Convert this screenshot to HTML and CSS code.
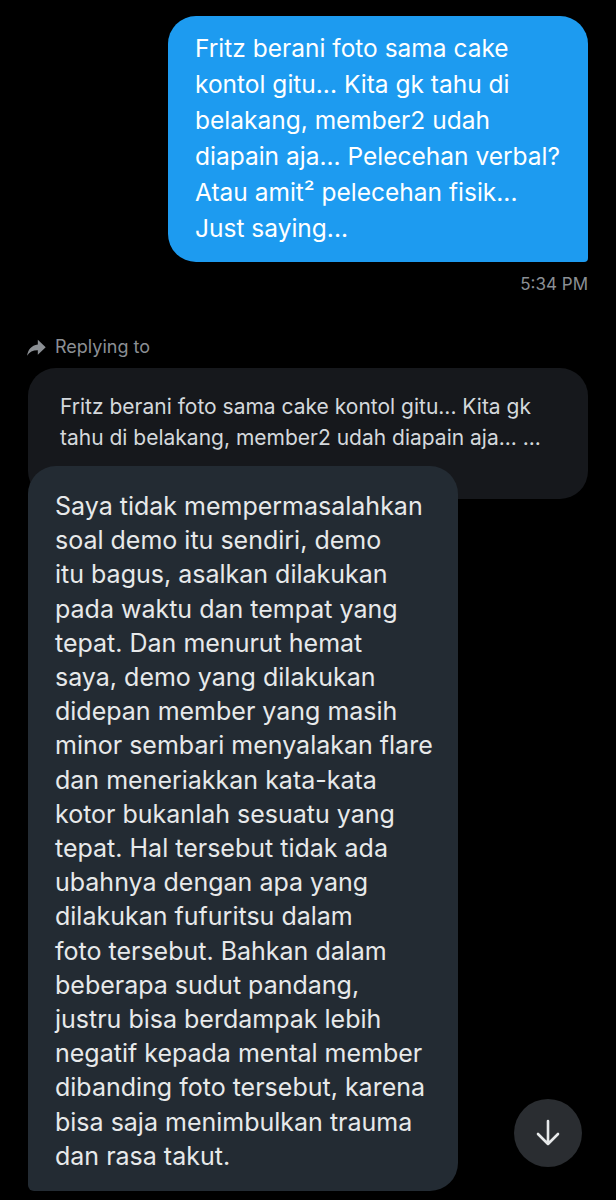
FILE: index.html
```html
<!DOCTYPE html>
<html>
<head>
<meta charset="utf-8">
<link rel="stylesheet" href="styles.css">
</head>
<body>
<div class="thread">
  <div class="sent-row">
    <div class="bubble bubble-sent">Fritz berani foto sama cake<br>kontol gitu... Kita gk tahu di<br>belakang, member2 udah<br>diapain aja... Pelecehan verbal?<br>Atau amit² pelecehan fisik...<br>Just saying...</div>
  </div>
  <div class="time">5:34 PM</div>

  <div class="replying">
    <svg class="reply-icon" viewBox="0 0 24 24" width="21" height="21"><path d="M13.5 3.2l9 8.6-9 8.6v-5.2c-5.6-.1-9.4 1.8-12.3 6.2 1-6.8 4.8-11.9 12.3-12.9V3.2z" fill="#8b8f94"/></svg>
    <span>Replying to</span>
  </div>
  <div class="quote">Fritz berani foto sama cake kontol gitu... Kita gk<br>tahu di belakang, member2 udah diapain aja... ...</div>

  <div class="bubble bubble-recv">Saya tidak mempermasalahkan<br>soal demo itu sendiri, demo<br>itu bagus, asalkan dilakukan<br>pada waktu dan tempat yang<br>tepat. Dan menurut hemat<br>saya, demo yang dilakukan<br>didepan member yang masih<br>minor sembari menyalakan flare<br>dan meneriakkan kata-kata<br>kotor bukanlah sesuatu yang<br>tepat. Hal tersebut tidak ada<br>ubahnya dengan apa yang<br>dilakukan fufuritsu dalam<br>foto tersebut. Bahkan dalam<br>beberapa sudut pandang,<br>justru bisa berdampak lebih<br>negatif kepada mental member<br>dibanding foto tersebut, karena<br>bisa saja menimbulkan trauma<br>dan rasa takut.</div>
</div>
<button class="scroll-down" aria-label="Scroll down">
  <svg viewBox="0 0 32 32" width="32" height="32"><path d="M16 4v23M6 17l10 10 10-10" fill="none" stroke="#e7e9ea" stroke-width="2.6" stroke-linecap="round" stroke-linejoin="round"/></svg>
</button>
</body>
</html>
```
FILE: styles.css
```css
html, body {
  margin: 0;
  padding: 0;
  background: #000;
  height: 1200px;
  overflow: hidden;
}
body {
  font-family: Inter, Roboto, "Liberation Sans", sans-serif;
  position: relative;
}
.thread {
  display: flex;
  flex-direction: column;
  padding: 16px 28px 0 28px;
}
.sent-row {
  display: flex;
  justify-content: flex-end;
}
.bubble {
  font-size: 24.5px;
  letter-spacing: 0;
}
.bubble-sent {
  width: 420px;
  box-sizing: border-box;
  background: #1d9bf0;
  color: #fff;
  line-height: 36px;
  border-radius: 28px 28px 4px 28px;
  padding: 14px 16px 16px 27px;
}
.time {
  align-self: flex-end;
  margin-top: 12px;
  font-size: 17px;
  line-height: 20px;
  color: #8b8f94;
}
.replying {
  display: flex;
  align-items: center;
  gap: 8px;
  margin-top: 42px;
  margin-left: -2px;
  font-size: 18px;
  line-height: 22px;
  color: #8b8f94;
}
.reply-icon {
  display: block;
}
.quote {
  margin-top: 10px;
  background: #16181c;
  border-radius: 28px;
  padding: 23px 16px 46px 32px;
  font-size: 21px;
  line-height: 31px;
  color: #d4d8dc;
}
.bubble-recv {
  position: relative;
  margin-top: -33px;
  width: 430px;
  box-sizing: border-box;
  background: #232b33;
  color: #e7e9ea;
  font-size: 25px;
  line-height: 34.2px;
  border-radius: 28px 28px 28px 6px;
  padding: 23px 10px 18px 27px;
}
.scroll-down {
  position: absolute;
  left: 514px;
  top: 1099px;
  width: 68px;
  height: 68px;
  border-radius: 50%;
  border: none;
  background: #2a2d31;
  display: flex;
  align-items: center;
  justify-content: center;
  padding: 0;
}
.scroll-down svg {
  display: block;
}
```
